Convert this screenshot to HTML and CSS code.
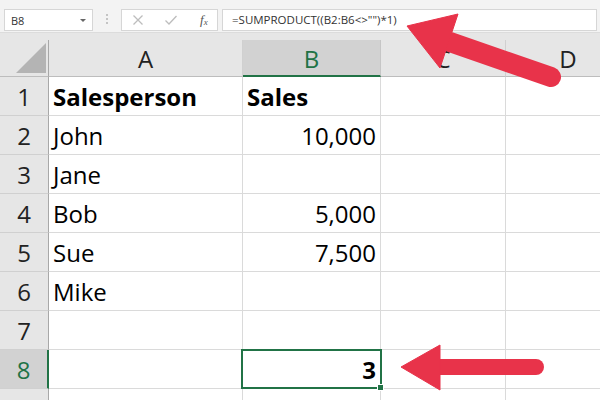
FILE: index.html
```html
<!DOCTYPE html>
<html>
<head>
<meta charset="utf-8">
<link rel="stylesheet" href="styles.css">
</head>
<body>
<div class="app">
  <div class="toolbar">
    <div class="namebox"><span class="ref">B8</span><span class="caret"></span></div>
    <div class="grip"><i></i><i></i><i></i></div>
    <div class="fxbox">
      <svg class="ico" width="12" height="12" viewBox="0 0 12 12"><path d="M1.5 1.5 L10.5 10.5 M10.5 1.5 L1.5 10.5" stroke="#bdbdbd" stroke-width="1.3" fill="none"/></svg>
      <svg class="ico" width="14" height="12" viewBox="0 0 14 12"><path d="M1.5 6.5 L5 10 L12.5 2" stroke="#bdbdbd" stroke-width="1.3" fill="none"/></svg>
      <span class="fx">f<sub>x</sub></span>
    </div>
    <div class="formula">=SUMPRODUCT((B2:B6&lt;&gt;"")*1)</div>
  </div>
  <div class="grid">
    <div class="corner"><span class="tri"></span></div>
    <div class="ch">A</div><div class="ch sel">B</div><div class="ch">C</div><div class="ch">D</div>

    <div class="rh">1</div><div class="c b">Salesperson</div><div class="c b">Sales</div><div class="c"></div><div class="c"></div>
    <div class="rh">2</div><div class="c">John</div><div class="c r">10,000</div><div class="c"></div><div class="c"></div>
    <div class="rh">3</div><div class="c">Jane</div><div class="c r"></div><div class="c"></div><div class="c"></div>
    <div class="rh">4</div><div class="c">Bob</div><div class="c r">5,000</div><div class="c"></div><div class="c"></div>
    <div class="rh">5</div><div class="c">Sue</div><div class="c r">7,500</div><div class="c"></div><div class="c"></div>
    <div class="rh">6</div><div class="c">Mike</div><div class="c"></div><div class="c"></div><div class="c"></div>
    <div class="rh">7</div><div class="c"></div><div class="c"></div><div class="c"></div><div class="c"></div>
    <div class="rh sel">8</div><div class="c"></div><div class="c r b active">3<span class="handle"></span></div><div class="c"></div><div class="c"></div>
    <div class="rh"></div><div class="c"></div><div class="c"></div><div class="c"></div><div class="c"></div>
  </div>
  <svg class="arrows" width="600" height="400" viewBox="0 0 600 400">
    <g fill="#e8334a" stroke="#e8334a">
      <line x1="450" y1="42" x2="551" y2="77" stroke-width="20" stroke-linecap="round"/>
      <polygon points="407,26 458,14 440,68" stroke-width="1" stroke-linejoin="round"/>
      <line x1="436" y1="367" x2="536" y2="367" stroke-width="16" stroke-linecap="round"/>
      <polygon points="401,367 440,345 440,390" stroke-width="1" stroke-linejoin="round"/>
    </g>
  </svg>
</div>
</body>
</html>
```
FILE: styles.css
```css
html, body {
  margin: 0;
  padding: 0;
  width: 600px;
  height: 400px;
  overflow: hidden;
  background: #ffffff;
}

.app {
  position: relative;
  width: 600px;
  height: 400px;
  overflow: hidden;
  font-family: "Open Sans", "Noto Sans", sans-serif;
}

.toolbar {
  box-sizing: border-box;
  height: 33px;
  background: #f3f3f3;
  border-bottom: 1px solid #dcdcdc;
  display: flex;
  align-items: flex-start;
  padding: 9px 0 0 4px;
}

.namebox, .fxbox, .formula {
  box-sizing: border-box;
  height: 22px;
  background: #ffffff;
  border: 1px solid #d6d6d6;
}

.namebox {
  width: 89px;
  display: flex;
  align-items: center;
  justify-content: space-between;
  padding: 0 6px 0 6px;
}

.ref {
  font-size: 11px;
  color: #333333;
}

.caret {
  width: 0;
  height: 0;
  border-left: 3px solid transparent;
  border-right: 3px solid transparent;
  border-top: 3px solid #666666;
}

.grip {
  width: 28px;
  display: flex;
  flex-direction: column;
  align-items: center;
  gap: 2px;
  padding-top: 5px;
}

.grip i {
  display: block;
  width: 2px;
  height: 2px;
  background: #c4c4c4;
}

.fxbox {
  width: 97px;
  display: flex;
  align-items: center;
  padding-left: 10px;
  gap: 20px;
}

.fx {
  font-family: "Liberation Serif", serif;
  font-style: italic;
  font-size: 13px;
  color: #555555;
  margin-left: 2px;
}

.fx sub {
  font-size: 9px;
  vertical-align: -1px;
}

.formula {
  flex: 1;
  margin-left: 4px;
  margin-right: 3px;
  padding-left: 9px;
  font-size: 11.5px;
  line-height: 20px;
  color: #333333;
}

.grid {
  display: grid;
  grid-template-columns: 49px 194px 138px 125px 125px;
  grid-template-rows: 37px repeat(9, 39px);
  padding-top: 7px;
  background: #e6e6e6;
}

.grid > div {
  box-sizing: border-box;
}

.corner {
  position: relative;
  border-right: 1px solid #a8a8a8;
  border-bottom: 1px solid #bdbdbd;
}

.tri {
  position: absolute;
  left: 16px;
  top: 3px;
  width: 30px;
  height: 30px;
  background: #b4b4b4;
  clip-path: polygon(100% 0, 100% 100%, 0 100%);
}

.ch {
  display: flex;
  align-items: center;
  justify-content: center;
  font-size: 24px;
  color: #222222;
  border-right: 1px solid #d0d0d0;
  border-bottom: 1px solid #bdbdbd;
  padding-top: 1px;
}

.ch.sel {
  background: #d2d2d2;
  color: #217346;
  border-bottom: 2px solid #217346;
  border-right: 1px solid #c6c6c6;
}

.rh {
  display: flex;
  align-items: center;
  justify-content: center;
  font-size: 24px;
  color: #222222;
  border-right: 1px solid #a8a8a8;
  border-bottom: 1px solid #d0d0d0;
}

.rh.sel {
  background: #d2d2d2;
  color: #217346;
  border-right: 2px solid #217346;
}

.c {
  display: flex;
  align-items: center;
  padding: 0 4px;
  background: #ffffff;
  font-size: 24px;
  color: #000000;
  border-right: 1px solid #dadada;
  border-bottom: 1px solid #dadada;
  white-space: nowrap;
}

.c.b {
  font-weight: 700;
}

.c.r {
  justify-content: flex-end;
}

.active {
  position: relative;
}

.active::after {
  content: "";
  position: absolute;
  left: -2px;
  top: -1px;
  right: -2px;
  bottom: -1px;
  border: 2px solid #217346;
}

.handle {
  position: absolute;
  right: -4px;
  bottom: -3px;
  width: 5px;
  height: 5px;
  background: #217346;
  border: 1px solid #ffffff;
  z-index: 2;
}

.arrows {
  position: absolute;
  left: 0;
  top: 0;
  pointer-events: none;
}
```
